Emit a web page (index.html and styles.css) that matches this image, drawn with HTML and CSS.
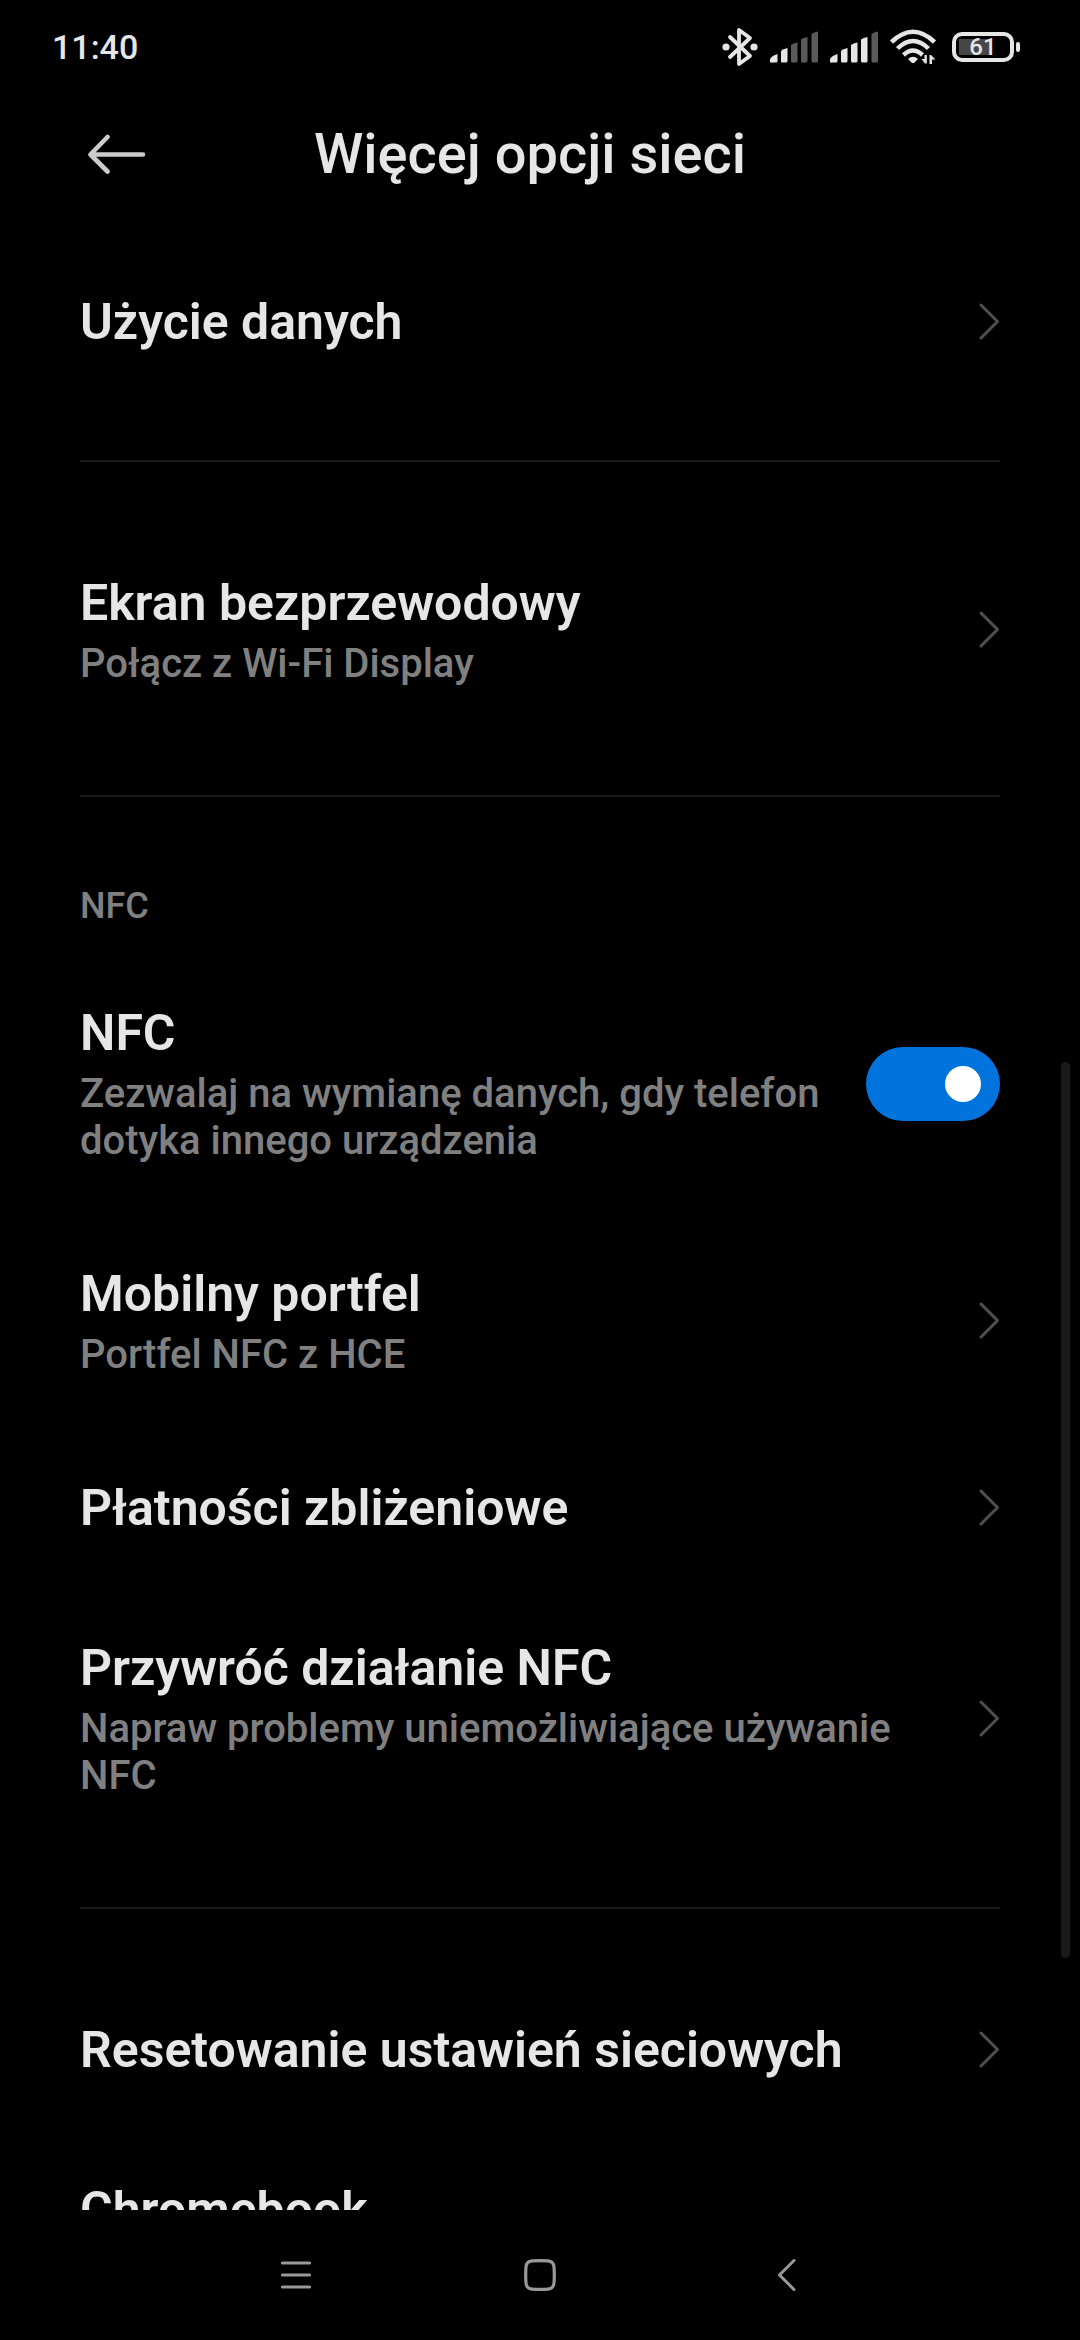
FILE: index.html
```html
<!DOCTYPE html>
<html lang="pl">
<head>
    <meta charset="UTF-8">
    <meta name="viewport" content="width=device-width, initial-scale=1">
    <title>Więcej opcji sieci</title>
    <link rel="stylesheet" href="styles.css">
</head>
<body>
<svg width="0" height="0" class="defs">
    <symbol id="chevron" viewBox="0 0 22 40">
        <path d="M3 3L19.500 19.500L3 36" fill="none" stroke="#505050" stroke-width="3" stroke-linecap="round" stroke-linejoin="round"/>
    </symbol>
</svg>

<div class="status">
    <span class="time">11:40</span>
    <div class="status-icons">
        <svg class="bt" width="36" height="40" viewBox="0 0 36 40">
            <path d="M8 10L28 29L17 37V3L28 11L8 30" fill="none" stroke="#e6e6e6" stroke-width="3.800" stroke-linecap="round" stroke-linejoin="round"/>
            <circle cx="4" cy="20" r="3.600" fill="#e6e6e6"/>
            <circle cx="32" cy="20" r="3.600" fill="#e6e6e6"/>
        </svg>
        <svg width="48" height="32" viewBox="0 0 48 32" fill="#5a5a5a">
            <path d="M0 31.500V28Q2 24.500 7.500 23V30Q7.500 31.500 6 31.500Z" fill="#e6e6e6"/>
            <path d="M11.500 31.500Q11 31 11 30V20Q13 18 17.500 17V30Q17.500 31.500 16 31.500Z" fill="#e6e6e6"/>
            <path d="M22.500 31.500Q21 31.500 21 30V14Q23 12 27.500 11.500V30Q27.500 31.500 26 31.500Z"/>
            <path d="M32.500 31.500Q31 31.500 31 30V8.500Q33 6.500 37.500 6V30Q37.500 31.500 36 31.500Z"/>
            <path d="M43 31.500Q41.500 31.500 41.500 30V3Q43.500 1 48 .5V30Q48 31.500 46.500 31.500Z"/>
        </svg>
        <svg width="48" height="32" viewBox="0 0 48 32" fill="#e6e6e6">
            <path d="M0 31.500V28Q2 24.500 7.500 23V30Q7.500 31.500 6 31.500Z"/>
            <path d="M11.500 31.500Q11 31 11 30V20Q13 18 17.500 17V30Q17.500 31.500 16 31.500Z"/>
            <path d="M22.500 31.500Q21 31.500 21 30V14Q23 12 27.500 11.500V30Q27.500 31.500 26 31.500Z"/>
            <path d="M32.500 31.500Q31 31.500 31 30V8.500Q33 6.500 37.500 6V30Q37.500 31.500 36 31.500Z"/>
            <path d="M43 31.500Q41.500 31.500 41.500 30V3Q43.500 1 48 .5V30Q48 31.500 46.500 31.500Z" fill="#5a5a5a"/>
        </svg>
        <svg class="wifi" width="46" height="36" viewBox="0 0 46 36">
            <g fill="none" stroke="#e6e6e6" stroke-width="4.500">
                <path d="M1.500 13Q23 -7.500 44.500 13"/>
                <path d="M7.500 19.500Q23 4.500 38.500 19.500"/>
                <path d="M13.500 26Q23 17 32.500 26"/>
            </g>
            <path d="M18 30Q23 25.500 28 30L24.500 33.500Q23 34.500 21.500 33.500Z" fill="#e6e6e6"/>
            <path d="M36.800 26V34.500H35L31.500 30H34.500V26ZM39.500 35V26H41L45.500 30.500H42V35Z" fill="#e6e6e6"/>
        </svg>
        <div class="battery"><span>61</span></div>
    </div>
</div>

<header class="top">
    <button class="back" type="button" aria-label="Wstecz">
        <svg width="58" height="40" viewBox="0 0 58 40">
            <path d="M19.500 3L2.500 20.500L19.500 37.500M3 20.500H55" fill="none" stroke="#cccccc" stroke-width="4.600" stroke-linecap="round" stroke-linejoin="round"/>
        </svg>
    </button>
    <h1>Więcej opcji sieci</h1>
</header>

<main class="list">
    <section class="group">
        <a class="row" href="#">
            <span class="text"><span class="name">Użycie danych</span></span>
            <svg class="arrow"><use href="#chevron"/></svg>
        </a>
    </section>

    <section class="group">
        <a class="row" href="#">
            <span class="text">
                <span class="name">Ekran bezprzewodowy</span>
                <span class="desc">Połącz z Wi-Fi Display</span>
            </span>
            <svg class="arrow"><use href="#chevron"/></svg>
        </a>
    </section>

    <section class="group titled">
        <h2>NFC</h2>
        <div class="row">
            <label class="text" for="nfc">
                <span class="name">NFC</span>
                <span class="desc">Zezwalaj na wymianę danych, gdy telefon dotyka innego urządzenia</span>
            </label>
            <input class="switch" type="checkbox" id="nfc" checked>
        </div>
        <a class="row" href="#">
            <span class="text">
                <span class="name">Mobilny portfel</span>
                <span class="desc">Portfel NFC z HCE</span>
            </span>
            <svg class="arrow"><use href="#chevron"/></svg>
        </a>
        <a class="row" href="#">
            <span class="text"><span class="name">Płatności zbliżeniowe</span></span>
            <svg class="arrow"><use href="#chevron"/></svg>
        </a>
        <a class="row" href="#">
            <span class="text">
                <span class="name">Przywróć działanie NFC</span>
                <span class="desc">Napraw problemy uniemożliwiające używanie NFC</span>
            </span>
            <svg class="arrow"><use href="#chevron"/></svg>
        </a>
    </section>

    <section class="group">
        <a class="row" href="#">
            <span class="text"><span class="name">Resetowanie ustawień sieciowych</span></span>
            <svg class="arrow"><use href="#chevron"/></svg>
        </a>
        <a class="row" href="#">
            <span class="text"><span class="name">Chromebook</span></span>
        </a>
    </section>
    <div class="scrollbar"></div>
</main>

<nav class="keys">
    <button type="button" aria-label="Menu">
        <svg width="32" height="32" viewBox="0 0 32 32">
            <path d="M2.500 4H29.500M2.500 16H29.500M2.500 28H29.500" stroke="#999999" stroke-width="3.200" stroke-linecap="round"/>
        </svg>
    </button>
    <button type="button" aria-label="Ekran główny">
        <svg width="32" height="32" viewBox="0 0 32 32">
            <path d="M8 1.900Q16 1.300 24 1.900Q29.500 2.300 30 8Q30.600 16 30 24Q29.500 29.600 24 30.100Q16 30.700 8 30.100Q2.400 29.600 2 24Q1.400 16 2 8Q2.400 2.300 8 1.900Z" fill="none" stroke="#999999" stroke-width="3.200"/>
        </svg>
    </button>
    <button type="button" aria-label="Cofnij">
        <svg width="32" height="32" viewBox="0 0 32 32">
            <path d="M26 1.500L11.500 16L26 30.500" fill="none" stroke="#999999" stroke-width="3" stroke-linecap="round" stroke-linejoin="round"/>
        </svg>
    </button>
</nav>
</body>
</html>
```
FILE: styles.css
```css
* {
    margin: 0;
    padding: 0;
    box-sizing: border-box;
}

body {
    display: flex;
    flex-direction: column;
    height: 100vh;
    overflow: hidden;
    background: #000;
    color: #e6e6e6;
    font-family: Roboto, "Noto Sans", sans-serif;
    font-weight: 500;
}

button {
    border: none;
    background: none;
    cursor: pointer;
}

svg {
    display: block;
    flex: none;
}

.defs {
    position: absolute;
}

/* status bar */
.status {
    display: flex;
    flex: none;
    align-items: center;
    justify-content: space-between;
    height: 94px;
    padding: 0 66px 0 52px;
}

.time {
    font-size: 34px;
    line-height: 40px;
}

.status-icons {
    display: flex;
    align-items: center;
    gap: 12px;
}

.wifi {
    margin-right: 4px;
}

.battery {
    position: relative;
    width: 62px;
    height: 30px;
    border: 4px solid #e6e6e6;
    border-radius: 10px;
    background: linear-gradient(#464646, #464646) 3px 3px / 30px 16px no-repeat;
    font-size: 24px;
    line-height: 23px;
    text-align: center;
}

.battery::after {
    content: "";
    position: absolute;
    top: 6px;
    right: -10px;
    width: 4px;
    height: 10px;
    border-radius: 2px;
    background: #e6e6e6;
}

/* header */
.top {
    display: grid;
    grid-template-columns: 58px 1fr 80px;
    flex: none;
    align-items: center;
    height: 120px;
    padding: 0 86px 0 88px;
}

.top h1 {
    font-size: 56px;
    font-weight: 500;
    line-height: 66px;
    text-align: center;
}

/* settings */
.list {
    position: relative;
    flex: 1;
    min-height: 0;
    overflow: hidden;
    padding: 28px 80px 0;
}

.group + .group {
    margin-top: 58px;
    padding-top: 61px;
    border-top: 2px solid #1a1a1a;
}

.group + .titled {
    padding-top: 88px;
}

.group h2 {
    margin-bottom: 26px;
    color: #808080;
    font-size: 36px;
    font-weight: 500;
    line-height: 42px;
}

.row {
    display: flex;
    align-items: center;
    justify-content: space-between;
    gap: 40px;
    padding: 50px 0;
    color: inherit;
    text-decoration: none;
}

.text, .name, .desc {
    display: block;
}

.name {
    font-size: 50px;
    font-weight: 600;
    line-height: 60px;
}

.desc {
    margin-top: 7px;
    color: #808080;
    font-size: 40px;
    line-height: 47px;
}

.arrow {
    width: 22px;
    height: 40px;
}

.switch {
    appearance: none;
    flex: none;
    width: 134px;
    height: 74px;
    padding: 19px;
    border-radius: 37px;
    background: #333;
    cursor: pointer;
}

.switch::before {
    content: "";
    display: block;
    width: 36px;
    height: 36px;
    border-radius: 50%;
    background: #fff;
}

.switch:checked {
    background: #0073dd;
}

.switch:checked::before {
    margin-left: auto;
}

.scrollbar {
    position: absolute;
    top: 848px;
    right: 10px;
    width: 9px;
    height: 896px;
    border-radius: 5px;
    background: #1a1a1a;
}

/* navigation keys */
.keys {
    display: flex;
    flex: none;
    justify-content: center;
    height: 130px;
}

.keys button {
    display: flex;
    align-items: center;
    justify-content: center;
    width: 244px;
}
```
